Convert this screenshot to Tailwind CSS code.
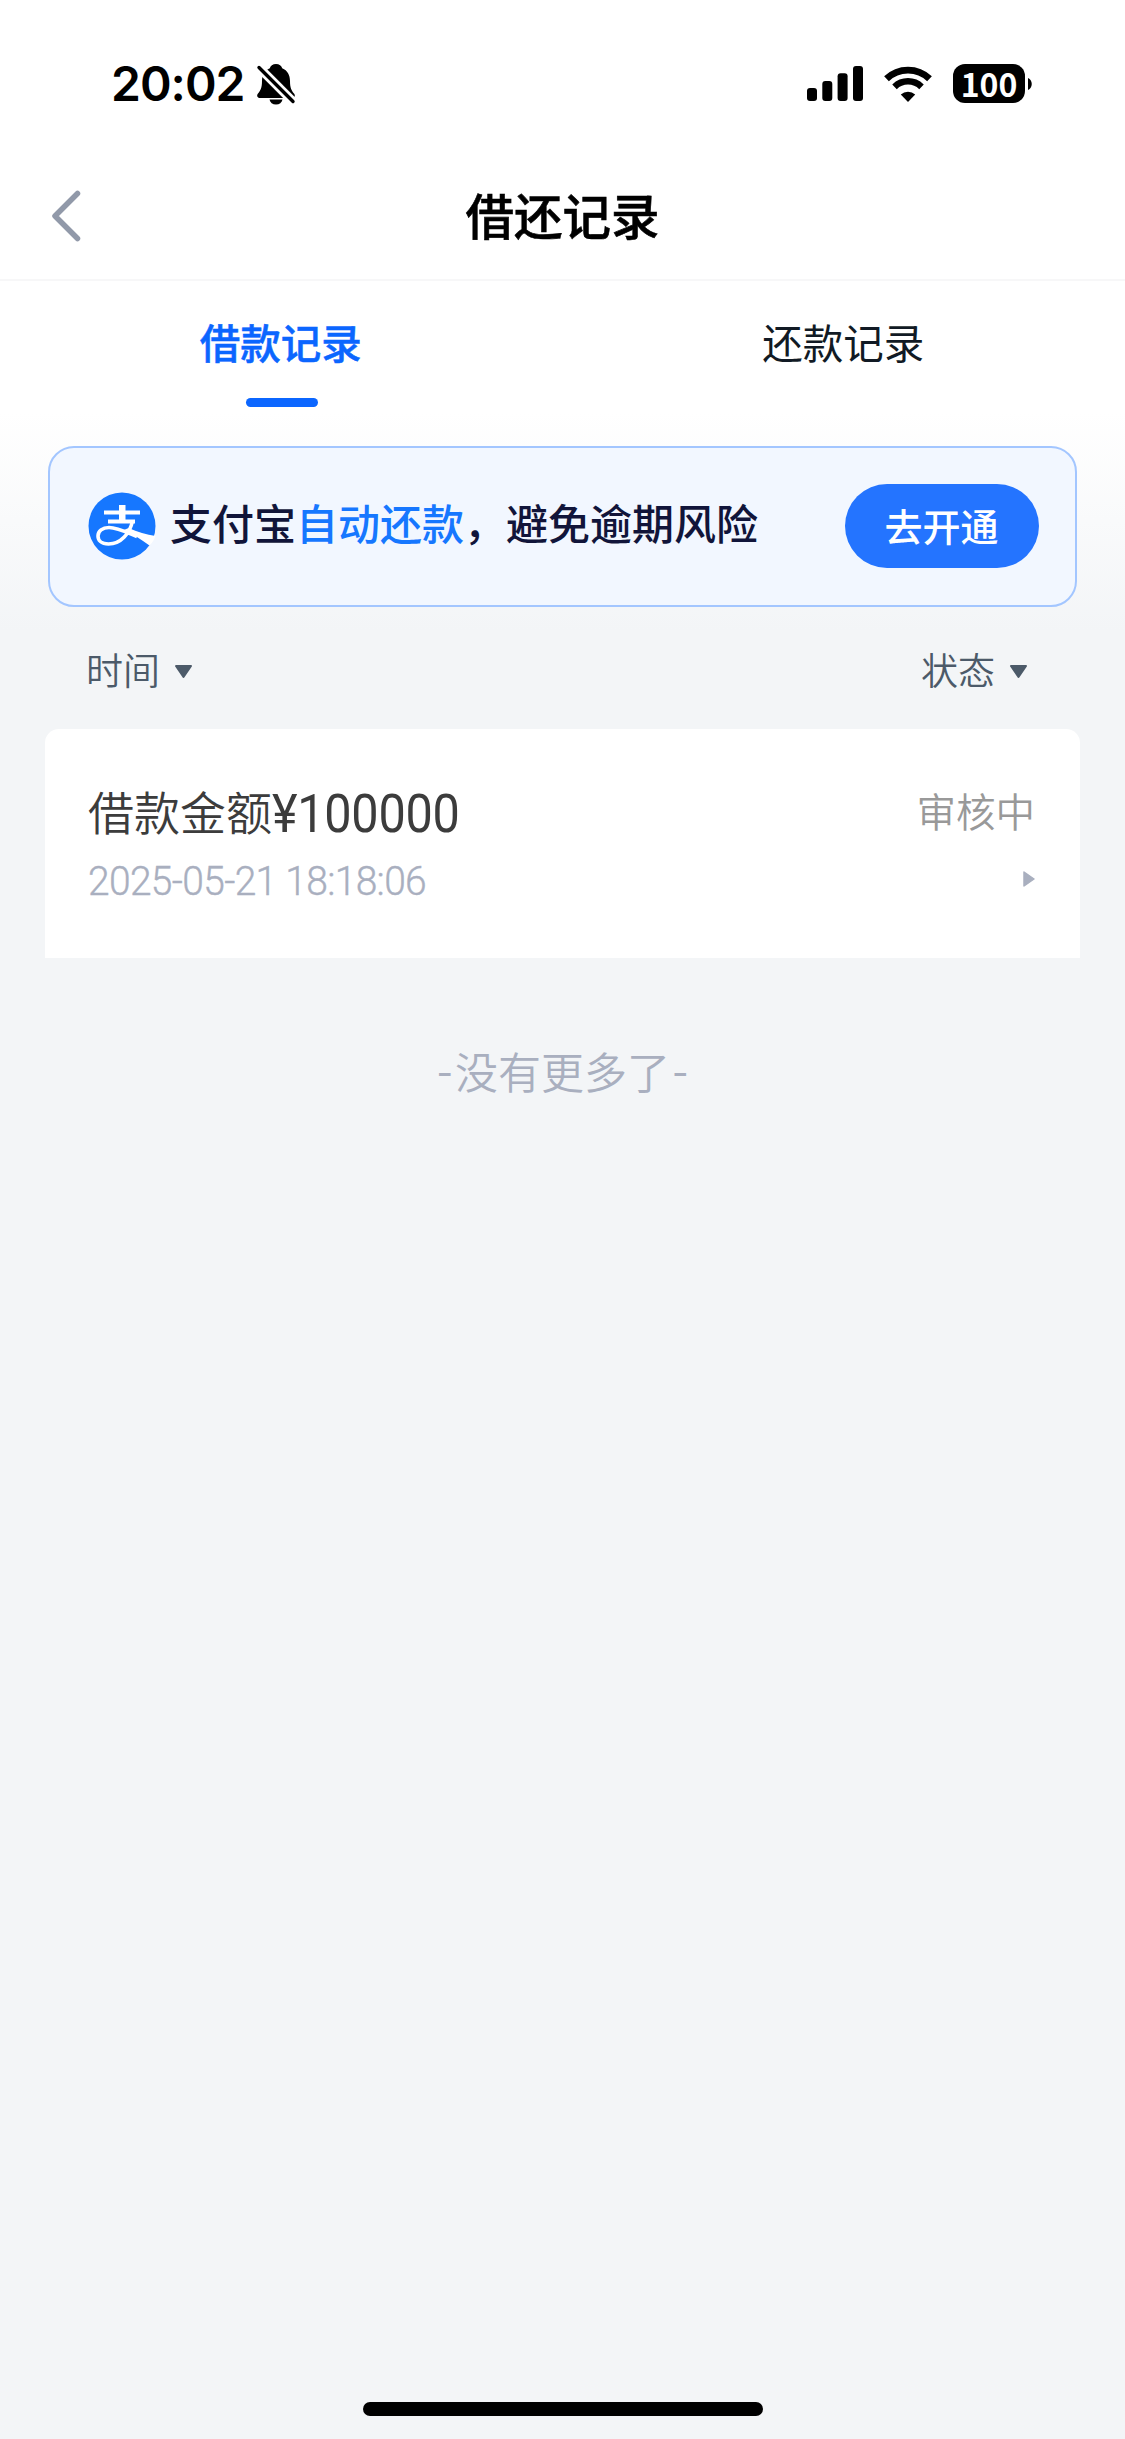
<!DOCTYPE html>
<html lang="zh-CN">
<head>
  <meta charset="UTF-8" />
  <meta name="viewport" content="width=device-width, initial-scale=1.0" />
  <title>借还记录</title>
  <script src="https://cdn.jsdelivr.net/npm/@tailwindcss/browser@4"></script>
</head>
<body class="bg-[#f3f5f7] font-['Noto_Sans_CJK_SC',sans-serif]">
  <div class="w-[1125px] h-[2439px] flex flex-col overflow-hidden">

    <!-- status bar -->
    <div class="h-[160px] shrink-0 bg-white flex items-start justify-between pl-[111px] pr-[93px] pt-[60px]">
      <div class="flex items-center h-[48px] gap-[12px]">
        <span class="font-['Inter',sans-serif] font-semibold text-[48px] leading-[48px] tracking-[-1px] w-[133px] whitespace-nowrap">20:02</span>
        <svg class="w-[40px] h-[44px]" viewBox="0 0 40 44">
          <path d="M20 2c3.300 0 5.500 1.600 6.200 4.300C31.500 8.500 34 13 34 19c0 7 1.500 9.500 4 12.500 1.600 2 .8 4.500-2 4.500H4c-2.800 0-3.600-2.500-2-4.500C4.500 28.500 6 26 6 19c0-6 2.500-10.500 7.800-12.700C14.500 3.600 16.700 2 20 2z" />
          <path d="M13.500 37.500h13c-.6 3-3 5-6.500 5s-5.900-2-6.500-5z" />
          <path d="M-1 1.500l39 39" stroke="#fff" stroke-width="9" />
          <path d="M6 0L-6 6l10 13z" fill="#fff" />
          <path d="M3 5.500l34 34" stroke="#000" stroke-width="3.400" stroke-linecap="round" />
        </svg>
      </div>
      <div class="flex items-center h-[47px]">
        <svg class="w-[56px] h-[35px]" viewBox="0 0 56 35">
          <rect x="0" y="22" width="10" height="13" rx="3" />
          <rect x="15.300" y="15" width="10" height="20" rx="3" />
          <rect x="30.600" y="7.300" width="10" height="27.700" rx="3" />
          <rect x="46" y="0" width="10" height="35" rx="3" />
        </svg>
        <svg class="w-[48px] h-[36px] ml-[21px]" viewBox="0 0 48 36">
          <path d="M24 36l-7.200-7.400a10.500 10.500 0 0 1 14.400 0z" />
          <path d="M10.500 20.800a19.500 19.500 0 0 1 27 0" fill="none" stroke="#000" stroke-width="6.500" />
          <path d="M2.500 12.800a31 31 0 0 1 43 0" fill="none" stroke="#000" stroke-width="6.800" />
        </svg>
        <div class="ml-[21px] w-[72px] h-[39px] rounded-[12px] bg-black text-white flex items-center justify-center font-bold text-[32px] leading-none pb-[2px]">100</div>
        <svg class="w-[4px] h-[12px] ml-[3px]" viewBox="0 0 4 12"><path d="M0 0c5 2 5 10 0 12z" /></svg>
      </div>
    </div>

    <!-- title bar -->
    <div class="h-[121px] shrink-0 bg-white border-b-2 border-[#f7f7f8] grid grid-cols-3 items-center px-[51px] pb-[8px]">
      <svg class="w-[30px] h-[52px]" viewBox="0 0 30 52" fill="none" stroke="#9199a9" stroke-width="5.500" stroke-linecap="round" stroke-linejoin="round">
        <path d="M26.500 3.500L4 26l22.500 22.500" />
      </svg>
      <h1 class="text-center font-medium text-[48.5px] leading-[56px] text-black pb-[3px] [-webkit-text-stroke:0.6px]">借还记录</h1>
    </div>

    <!-- tabs -->
    <div class="h-[130px] shrink-0 bg-white grid grid-cols-2 text-center text-[40.5px] leading-[48px] pt-[37px]">
      <div class="flex flex-col items-center">
        <span class="font-medium text-[#0b66ff] [-webkit-text-stroke:0.5px] mr-[1px]">借款记录</span>
        <span class="mt-[32px] ml-[2px] w-[72px] h-[9px] rounded-full bg-[#0b66ff]"></span>
      </div>
      <div class="text-[#111a24] pr-[1px]">还款记录</div>
    </div>

    <!-- alipay banner -->
    <div class="h-[220px] shrink-0 bg-linear-to-b from-white to-[#f3f5f7] px-[48px] pt-[35px]">
      <div class="h-[161px] rounded-[26px] border-2 border-[#a3c6ff] bg-[#f2f7ff] flex items-center pl-[38px] pr-[36px] pb-[2px]">
        <svg class="w-[68px] h-[68px]" viewBox="0 0 68 68">
          <circle cx="34" cy="34" r="33.500" fill="#1677ff" />
          <path d="M16 20.500h36M20 29.500h27" stroke="#fff" stroke-width="4" fill="none" />
          <path d="M31 13h6.500v16H31z" fill="#fff" />
          <path d="M44.500 29C42 41 33 52 20.500 52 13 52 10 48 10 44c0-5 4.500-8.500 11-8.500 8 0 16 4 28 9" stroke="#fff" stroke-width="3.600" fill="none" />
          <path d="M36 38c8 4 17 9 25.500 15.500 3-3 5-6.500 6-9.500-9-1.500-18-4-27-8z" fill="#fff" />
        </svg>
        <p class="ml-[14px] pb-[7px] font-medium text-[42px] leading-[56px] text-[#11153a] whitespace-nowrap">支付宝<span class="text-[#1677ff]">自动还款</span>，避免逾期风险</p>
        <button class="ml-auto w-[194px] h-[84px] rounded-full bg-[#2474ff] text-white font-medium text-[38px] leading-[82px] pb-[2px] pr-[1px]">去开通</button>
      </div>
    </div>

    <!-- filters -->
    <div class="h-[98px] shrink-0 flex items-center justify-between pl-[86px] pr-[97px] pb-[23px] text-[37px] leading-[48px] font-[350] text-[#4c5a69]">
      <div class="flex items-center gap-[14px]">
        <span>时间</span>
        <svg class="w-[19px] h-[14px] mt-[6px]" viewBox="0 0 19 14"><path d="M2 1h15L9.500 12z" fill="#4c5a69" stroke="#4c5a69" stroke-width="2" stroke-linejoin="round" /></svg>
      </div>
      <div class="flex items-center gap-[14px]">
        <span>状态</span>
        <svg class="w-[19px] h-[14px] mt-[6px]" viewBox="0 0 19 14"><path d="M2 1h15L9.500 12z" fill="#4c5a69" stroke="#4c5a69" stroke-width="2" stroke-linejoin="round" /></svg>
      </div>
    </div>

    <!-- record -->
    <div class="mx-[45px] h-[229px] shrink-0 rounded-t-[14px] bg-white pl-[43px] pr-[45px] pt-[53px]">
      <div class="flex items-center justify-between h-[56px]">
        <div class="flex items-center text-[46px] leading-[56px] text-[#3c3c3c]">
          <span class="font-[350]">借款金额</span><span class="inline-block origin-left scale-x-90 font-['Roboto',sans-serif] text-[54px] tracking-[-0.3px] pt-[7px]">¥100000</span>
        </div>
        <span class="text-[39.5px] leading-[56px] font-[350] text-[#999]">审核中</span>
      </div>
      <div class="flex items-center justify-between h-[48px] mt-[17px]">
        <span class="inline-block origin-left scale-x-95 font-['Roboto',sans-serif] font-light text-[41px] leading-[48px] text-[#a9afbf] tracking-[-0.7px] [-webkit-text-stroke:0.4px] pt-[3px]">2025-05-21 18:18:06</span>
        <svg class="w-[12px] h-[16px] mb-[1px]" viewBox="0 0 12 16"><path d="M1 1v14l10-7z" fill="#a9afbf" stroke="#a9afbf" stroke-width="1.500" stroke-linejoin="round" /></svg>
      </div>
    </div>

    <p class="mt-[81px] flex items-center justify-center gap-[2px] text-[43px] leading-[56px] font-[350] text-[#a9afbf]">
      <span class="font-['Inter',sans-serif] text-[36px] font-normal pt-[6px]">-</span>没有更多了<span class="font-['Inter',sans-serif] text-[36px] font-normal pt-[6px]">-</span>
    </p>

    <!-- home indicator -->
    <div class="mt-auto mb-[23px] mx-auto w-[400px] h-[14px] rounded-full bg-black"></div>
  </div>
</body>
</html>
